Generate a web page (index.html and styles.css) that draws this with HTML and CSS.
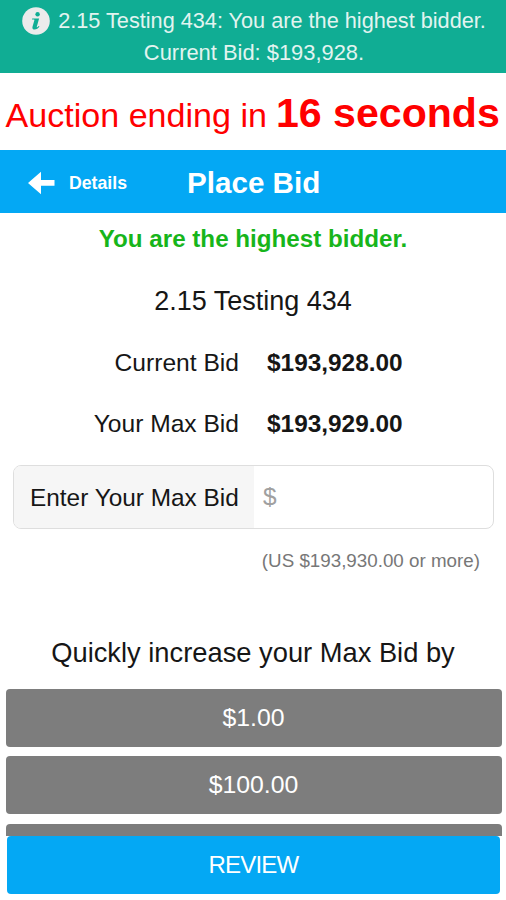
FILE: index.html
```html
<!DOCTYPE html>
<html lang="en">
<head>
<meta charset="utf-8">
<title>Place Bid</title>
<link rel="stylesheet" href="styles.css">
</head>
<body>
<div class="app">
  <div class="banner">
    <div class="banner-line">
      <svg class="info" viewBox="0 0 28 28" aria-hidden="true">
        <circle cx="14" cy="14" r="13.8" fill="#ebebeb"/>
        <circle cx="15.6" cy="7.2" r="2.2" fill="#10ad94"/>
        <path d="M10.2 11.6h6.9l-2.3 8.1c-.2.9.4 1 1.900-.7l.8.6c-1.400 2.100-3 3-4.800 3-1.900 0-2.700-1.100-2.200-2.900l1.800-6.300c.2-.7 0-.8-.6-.8h-1.700z" fill="#10ad94"/>
      </svg>
      <span class="banner-first">2.15 Testing 434: You are the highest bidder.</span>
    </div>
    <div class="banner-line">Current Bid: $193,928.</div>
  </div>
  <div class="countdown"><span>Auction ending in</span><strong>16 seconds</strong></div>
  <header class="navbar">
    <a class="back">
      <svg class="arrow" viewBox="0 0 27 24" aria-hidden="true"><path d="M0 12L13 .8V9H26.500V14.800H13V23.200Z" fill="#fff"/></svg>
      <span class="back-label">Details</span>
    </a>
    <h1>Place Bid</h1>
  </header>
  <main class="content">
    <p class="status">You are the highest bidder.</p>
    <h2 class="lot">2.15 Testing 434</h2>
    <dl class="bids">
      <dt>Current Bid</dt><dd>$193,928.00</dd>
      <dt>Your Max Bid</dt><dd>$193,929.00</dd>
    </dl>
    <label class="field">
      <span class="field-label">Enter Your Max Bid</span>
      <span class="field-value">$</span>
    </label>
    <p class="hint">(US $193,930.00 or more)</p>
    <h3 class="quick-title">Quickly increase your Max Bid by</h3>
    <div class="quick">
      <button>$1.00</button>
      <button>$100.00</button>
      <button></button>
    </div>
  </main>
  <footer class="footer"><button class="review">REVIEW</button></footer>
</div>
</body>
</html>
```
FILE: styles.css
```css
* { box-sizing: border-box; margin: 0; padding: 0; }
body { background: #fff; color: #161616; font-family: "Liberation Sans", Arial, sans-serif; }
.app { width: 506px; height: 900px; overflow: hidden; display: flex; flex-direction: column; }
.banner { flex: none; height: 72.5px; padding: 5px 0 0 2px; background: #10ad94; color: #e2f4f0; font-size: 21.9px; }
.banner-line { height: 32px; line-height: 32px; display: flex; justify-content: center; align-items: center; white-space: nowrap; }
.banner-first { font-size: 21.7px; }
.info { width: 28px; height: 28px; margin-right: 8px; flex: none; }
.countdown { flex: none; height: 77.5px; padding: 2px 0 0 5.5px; display: flex; align-items: baseline; color: #f00; font-size: 34.1px; line-height: 77px; white-space: nowrap; }
.countdown strong { font-size: 41.1px; margin-left: 9px; }
.navbar { flex: none; height: 62.5px; background: #04a8f4; color: #fff; display: grid; grid-template-columns: 187px 1fr; align-items: center; padding-top: 3px; }
.back { display: flex; align-items: center; padding-left: 28px; font-size: 17.7px; font-weight: bold; }
.arrow { width: 27px; height: 24px; margin-right: 14px; }
.back-label { padding-top: 2px; }
.navbar h1 { font-size: 29.6px; line-height: 34px; white-space: nowrap; }
.content { flex: 1; min-height: 0; overflow: hidden; }
.status { height: 51px; line-height: 51px; text-align: center; color: #17b51b; font-size: 24.2px; font-weight: bold; }
.lot { height: 69px; padding-top: 6px; line-height: 63px; text-align: center; font-size: 27px; font-weight: normal; }
.bids { display: grid; grid-template-columns: 239px 1fr; column-gap: 28px; grid-auto-rows: 61px; line-height: 59px; font-size: 24.6px; }
.bids dt { text-align: right; }
.bids dd { font-size: 24.4px; font-weight: bold; }
.field { margin: 10px 12px 0 13px; height: 64px; display: flex; border: 1px solid #dedede; border-radius: 8px; overflow: hidden; font-size: 24.4px; line-height: 64px; }
.field-label { width: 240px; padding-left: 16px; background: #f6f6f6; white-space: nowrap; }
.field-value { padding-left: 9px; color: #a0a0a0; line-height: 62px; }
.hint { margin: 16px 26px 0 0; height: 32px; line-height: 32px; text-align: right; color: #777; font-size: 18.8px; }
.quick-title { height: 60px; margin-top: 46px; line-height: 60px; text-align: center; font-size: 27.3px; font-weight: normal; }
.quick { margin: 6px 4.5px 0 5.5px; display: grid; grid-auto-rows: 58px; gap: 9.500px; }
button { display: block; border: 0; border-radius: 4px; background: #7d7d7d; color: #fff; font-family: inherit; font-size: 24.8px; line-height: 58px; text-align: center; }
.footer { flex: none; height: 64.5px; padding: 0 6px 6.5px 7px; }
.review { width: 100%; height: 58px; background: #04a8f4; font-size: 24px; letter-spacing: -.8px; }
```
